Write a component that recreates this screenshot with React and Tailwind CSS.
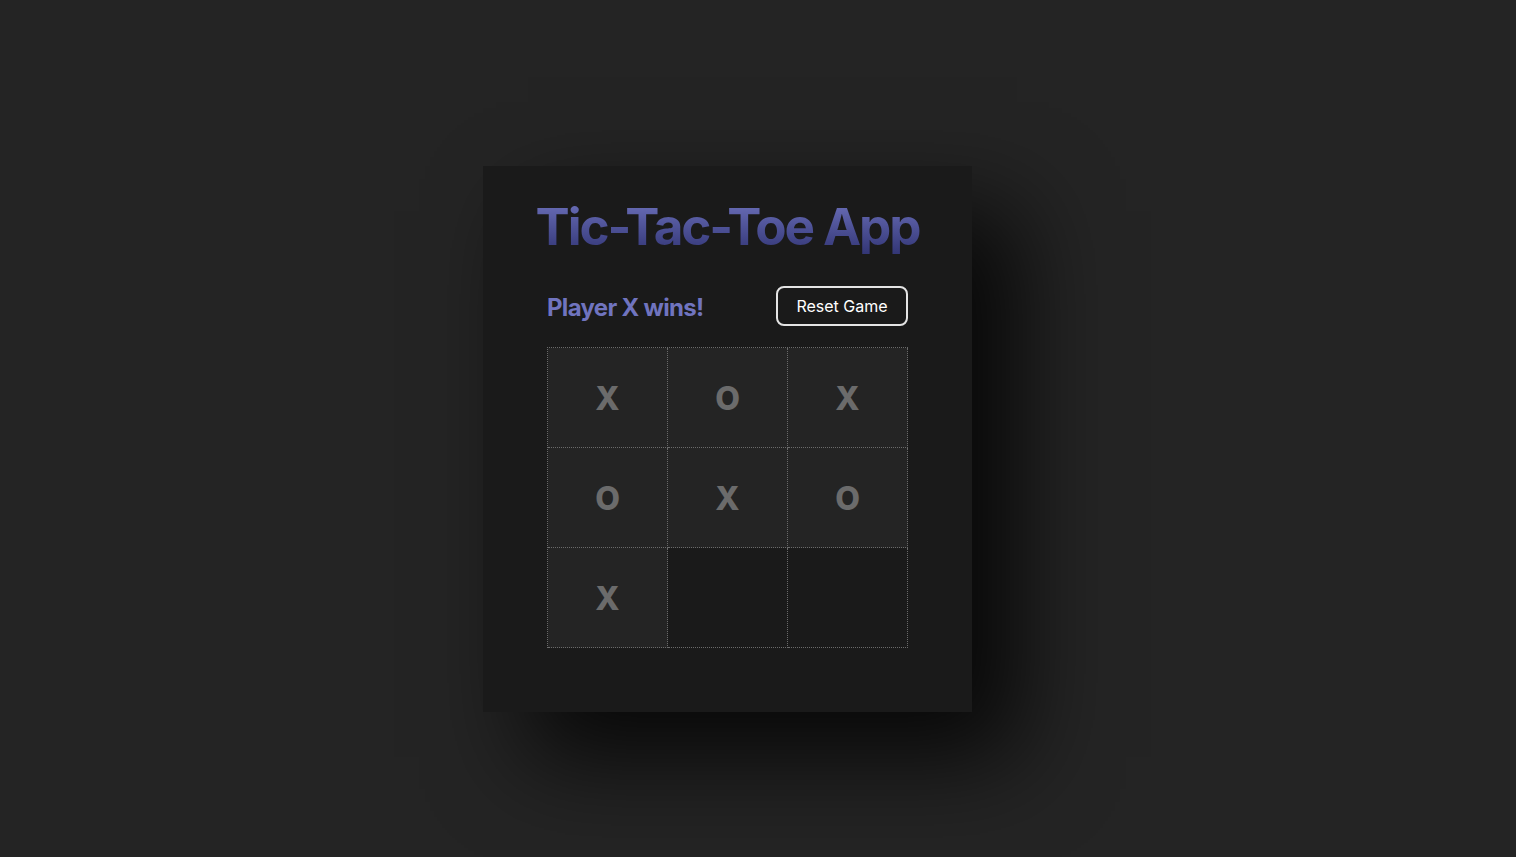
export default function App() {
  const cells = ["X", "O", "X", "O", "X", "O", "X", null, null];
  return (
    <div className="min-h-[857px] w-full bg-[#242424] pl-[483px] pt-[166px]" style={{ fontFamily: "Inter, 'Noto Sans', sans-serif" }}>
      <div className="w-[489px] h-[546px] bg-[#1a1a1a] px-16 pt-8 shadow-[45px_45px_90px_rgba(0,0,0,0.8)]">
        <h1 className="text-center text-[51.2px] leading-[56px] font-bold tracking-[-2.1px] bg-gradient-to-b from-[#6e72bc] to-[#333676] bg-clip-text text-transparent whitespace-nowrap -mx-8">
          Tic-Tac-Toe App
        </h1>
        <div className="mt-8 flex h-10 items-center justify-between">
          <span className="text-[24px] leading-[40px] translate-y-[2px] font-bold tracking-[-0.7px] text-[#7074bf]">Player X wins!</span>
          <button className="h-10 w-[132px] rounded-lg border-2 border-[#e4e4e4] bg-[#1a1a1a] text-[16px] font-normal text-white">
            Reset Game
          </button>
        </div>
        <div className="mt-[21px] grid grid-cols-[repeat(3,120px)] border-l border-t border-dotted border-[#6a6a6a] w-[361px]">
          {cells.map((c, i) => (
            <div
              key={i}
              className={`h-[100px] border-r border-b border-dotted border-[#6a6a6a] flex items-center justify-center pt-[2px] text-[32px] font-extrabold text-[#6b6b6b] ${c ? "bg-[#242424]" : "bg-[#1a1a1a]"}`}
            >
              {c}
            </div>
          ))}
        </div>
      </div>
    </div>
  );
}
